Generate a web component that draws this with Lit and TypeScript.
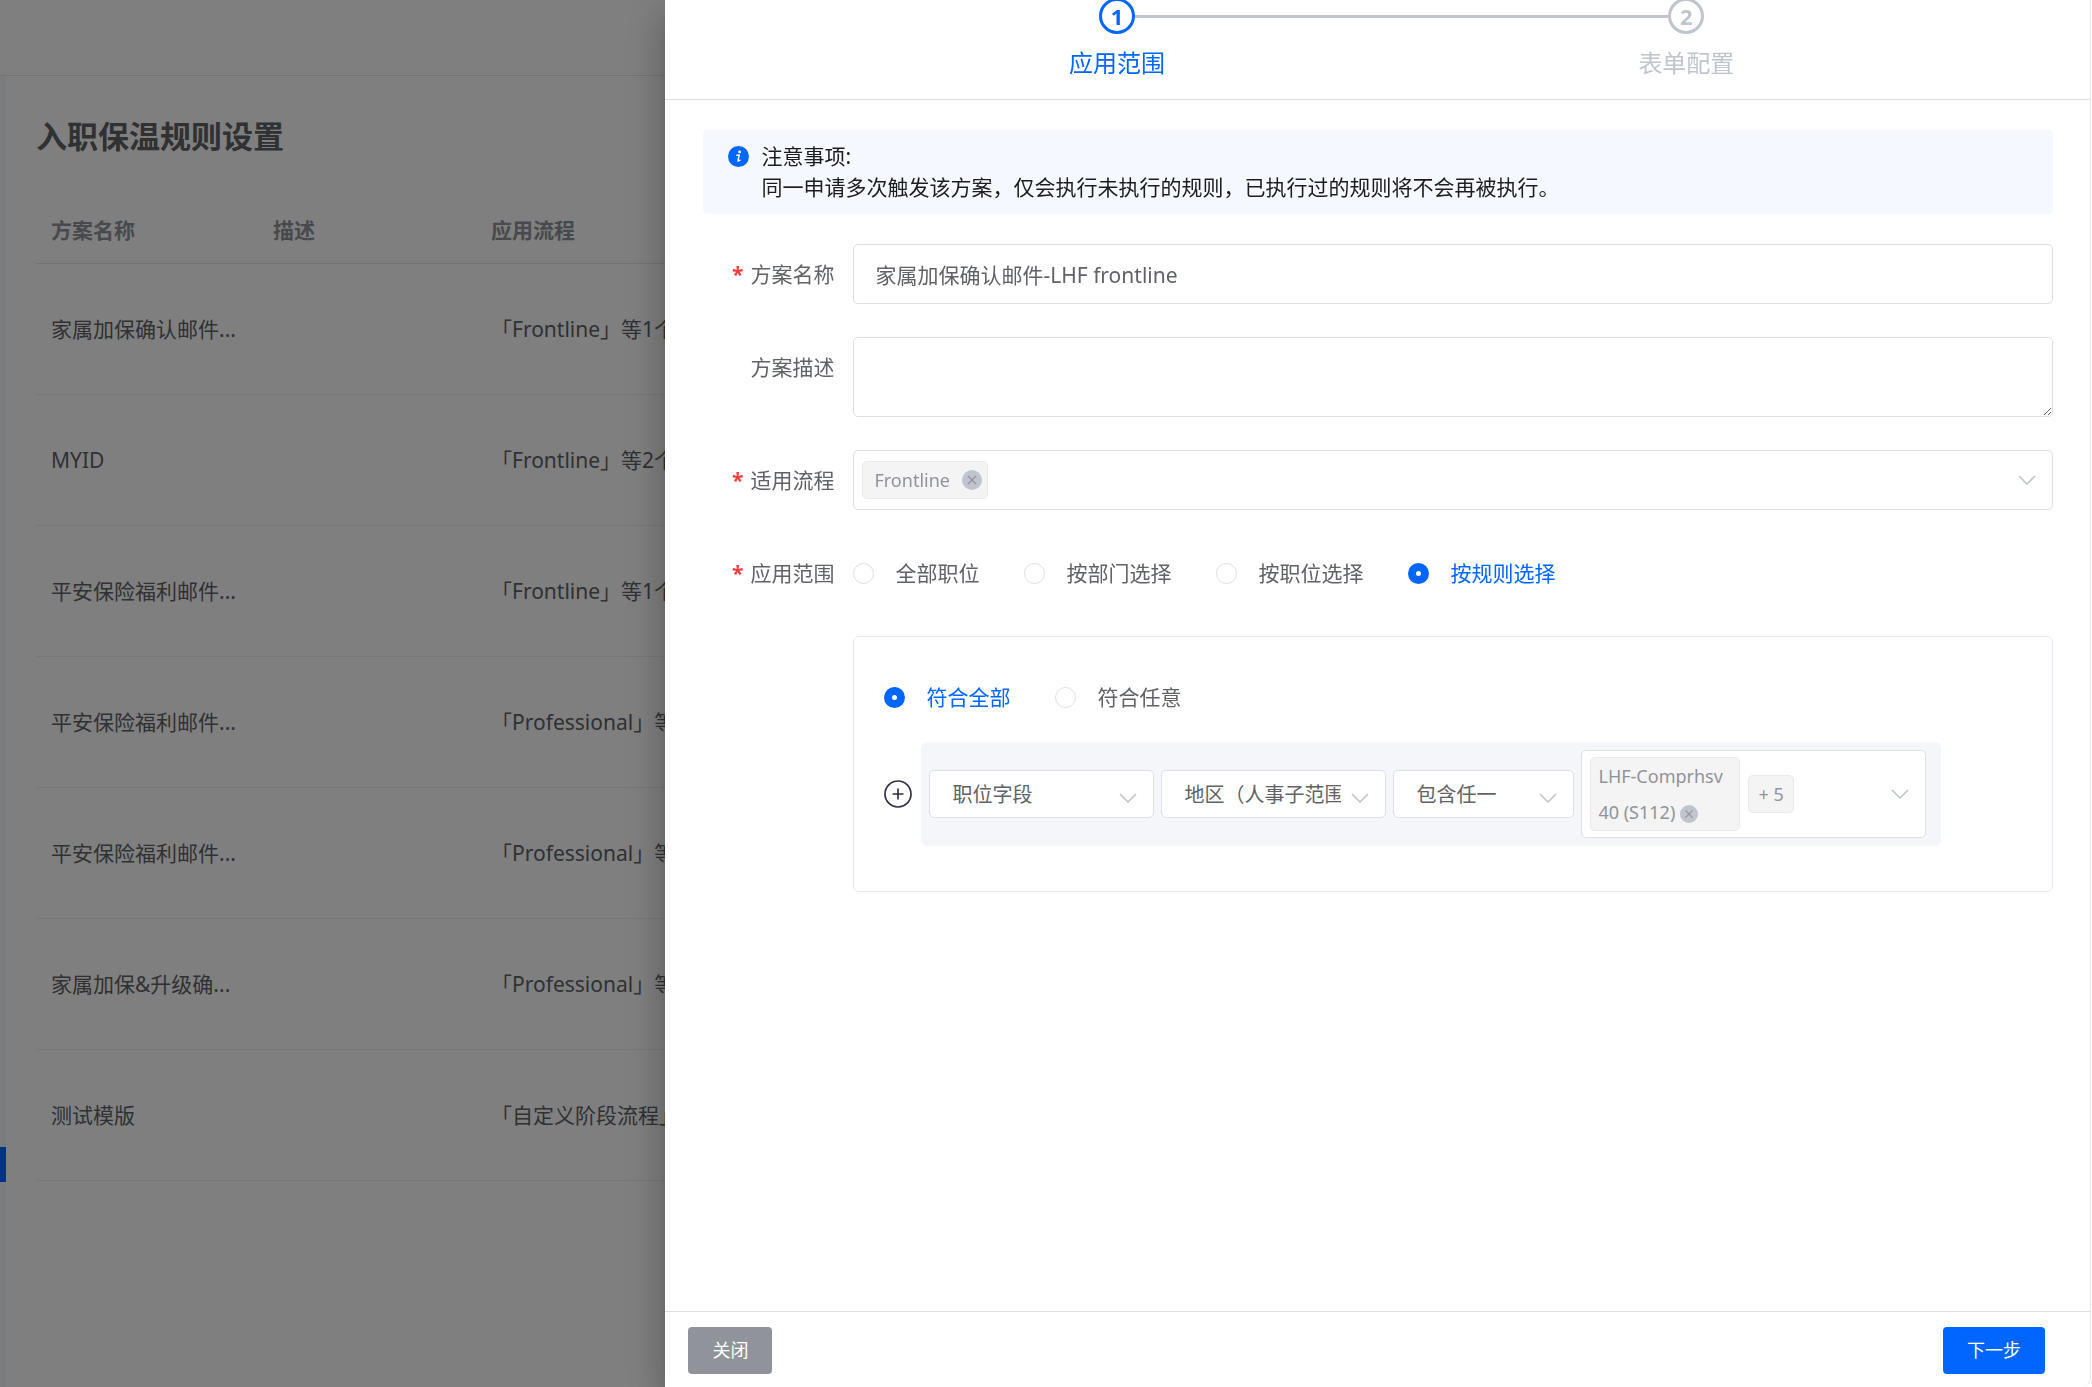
import { LitElement, html, svg, css, nothing } from "lit";
import { customElement, property, state } from "lit/decorators.js";
import { classMap } from "lit/directives/class-map.js";

interface Plan {
  name: string;
  description: string;
  flow: string;
}

const PLANS: Plan[] = [
  { name: "家属加保确认邮件...", description: "", flow: "「Frontline」等1个" },
  { name: "MYID", description: "", flow: "「Frontline」等2个" },
  { name: "平安保险福利邮件...", description: "", flow: "「Frontline」等1个" },
  { name: "平安保险福利邮件...", description: "", flow: "「Professional」等" },
  { name: "平安保险福利邮件...", description: "", flow: "「Professional」等" },
  { name: "家属加保&升级确...", description: "", flow: "「Professional」等" },
  { name: "测试模版", description: "", flow: "「自定义阶段流程」" },
];

const SCOPES = ["全部职位", "按部门选择", "按职位选择", "按规则选择"];
const MATCHES = ["符合全部", "符合任意"];

const chevron = svg`<svg class="chevron" viewBox="0 0 18 10" width="18" height="10" aria-hidden="true">
  <path d="M1 1 L9 9 L17 1" fill="none" stroke="#c0c4cc" stroke-width="1.6" />
</svg>`;

const cross = svg`<svg viewBox="0 0 20 20" aria-hidden="true">
  <path d="M6 6 L14 14 M14 6 L6 14" stroke="#909399" stroke-width="1.2" />
</svg>`;

const FONT = css`"Noto Sans", "Noto Sans CJK SC", sans-serif`;

@customElement("plan-table")
class PlanTable extends LitElement {
  static styles = css`
    :host { display: block; }
    .plans { width: 100%; table-layout: fixed; border-collapse: collapse; font-size: 21px; line-height: 30px; }
    .plans th, .plans td { padding: 0 15px; text-align: left; border-bottom: 1px solid #ebeef5; white-space: nowrap; overflow: hidden; }
    .plans th { height: 62px; padding-bottom: 2px; color: #909399; font-weight: 700; border-bottom-color: #e4e4e4; }
    .plans td { height: 130px; color: #606266; }
    .name { width: 192px; }
    .desc { width: 188px; }
  `;

  render() {
    return html`
      <table class="plans">
        <thead>
          <tr><th class="name">方案名称</th><th class="desc">描述</th><th>应用流程</th></tr>
        </thead>
        <tbody>
          ${PLANS.map((p) => html`<tr><td>${p.name}</td><td>${p.description}</td><td>${p.flow}</td></tr>`)}
        </tbody>
      </table>
    `;
  }
}

@customElement("radio-set")
class RadioSet extends LitElement {
  @property() name = "";
  @property() label = "";
  @property({ attribute: false }) options: string[] = [];
  @property() value = "";

  static styles = css`
    :host { display: block; }
    .set { display: flex; flex-wrap: wrap; gap: 45px; }
    .option { display: flex; align-items: center; gap: 21px; color: #606266; font-size: 21px; line-height: 30px; cursor: pointer; }
    .option.on { color: #0066ff; }
    .dot { appearance: none; box-sizing: border-box; width: 21px; height: 21px; margin: 0; border: 1px solid #dcdfe6; border-radius: 50%; background: #fff; }
    .dot:checked { border: 8px solid #0066ff; }
  `;

  render() {
    return html`
      <div class="set" role="radiogroup" aria-label=${this.label}>
        ${this.options.map((o) => html`
          <label class=${classMap({ option: true, on: o === this.value })}>
            <input class="dot" type="radio" name=${this.name} .value=${o} .checked=${o === this.value}
              @change=${() => (this.value = o)} />
            <span>${o}</span>
          </label>`)}
      </div>
    `;
  }
}

@customElement("app-root")
class AppRoot extends LitElement {
  @state() private planName = "家属加保确认邮件-LHF frontline";
  @state() private flows = ["Frontline"];
  @state() private regions = ["LHF-Comprhsv 40 (S112)"];

  static styles = css`
    :host { display: block; min-height: 100vh; background: #fff; font-family: ${FONT}; color: #606266; }
    *, *::before, *::after { box-sizing: border-box; }
    button, input, textarea, select { font: inherit; color: inherit; }

    .page { display: flex; flex-direction: column; min-height: 100vh; }
    .topbar { height: 76px; border-bottom: 1px solid #e4e4e4; }
    .body { flex: 1; display: flex; }
    .rail { width: 6px; padding-top: 1071px; background: #f5f6fb; }
    .rail-mark { height: 35px; background: #0066ff; }
    .content { flex: 1; min-width: 0; padding: 36px 30px; }
    .title { margin: 0 0 39px; font-size: 31px; line-height: 48px; font-weight: 700; }

    .overlay { position: fixed; inset: 0; display: flex; justify-content: flex-end; overflow: hidden; background: rgba(0, 0, 0, 0.5); }
    .shell {
      display: flex; width: calc(68% + 4px); padding-right: 1px; background: #fff;
      box-shadow: 0 10px 13px -7px rgba(0, 0, 0, 0.2), 0 21px 32px 3px rgba(0, 0, 0, 0.14), 0 8px 40px 7px rgba(0, 0, 0, 0.12);
    }
    .drawer { flex: 1; min-width: 0; display: flex; flex-direction: column; border-right: 1px solid #e4e4e8; border-bottom-right-radius: 9px; }

    .steps { display: flex; align-items: flex-end; height: 100px; margin: 0; padding: 0 119px 15px 167px; border-bottom: 1px solid #dcdfe6; list-style: none; }
    .step { position: relative; flex: 1; display: flex; flex-direction: column; align-items: center; gap: 8px; color: #c0c4cc; font-size: 24px; line-height: 42px; }
    .step.current { color: #0066ff; }
    .step + .step::before { content: ""; position: absolute; top: 17px; right: calc(50% + 18px); width: calc(100% - 36px); height: 3px; background: #c0c4cc; }
    .num { display: grid; place-items: center; width: 36px; height: 36px; border: 3px solid currentColor; border-radius: 50%; font-size: 22px; line-height: 30px; font-weight: 700; }

    .main { flex: 1; padding: 30px 37px 30px 38px; overflow: auto; }
    .notice { display: flex; gap: 12px; margin-bottom: 30px; padding: 11px 25px; border-radius: 5px; background: #f5f8ff; color: #1d1d1f; font-size: 21px; line-height: 31px; }
    .notice p { margin: 0; }
    .info { flex: none; width: 21px; height: 21px; margin-top: 5px; }

    .form { display: flex; flex-direction: column; gap: 33px; }
    .row { display: grid; grid-template-columns: 150px minmax(0, 1fr); font-size: 21px; }
    .caption { padding-right: 19px; line-height: 60px; text-align: right; }
    .required::before { content: "*"; margin-right: 7px; color: #f53f3f; font-weight: 700; }
    .field { grid-column: 2; min-width: 0; }
    .text { display: block; width: 100%; height: 60px; padding: 0 21px; border: 1px solid #dcdfe6; border-radius: 5px; background: #fff; }
    .area { display: block; width: 100%; height: 80px; padding: 7px 20px; border: 1px solid #dcdfe6; border-radius: 5px; background: #fff; resize: vertical; }
    .radios { display: flex; align-items: center; min-height: 60px; }

    .multi { display: flex; align-items: center; gap: 8px; min-height: 60px; padding: 6px 16px 6px 8px; border: 1px solid #dcdfe6; border-radius: 5px; background: #fff; }
    .filter { flex: 1; width: 0; min-width: 0; padding: 0; border: 0; outline: 0; background: none; }
    .chevron { flex: none; }
    .tag { display: flex; align-items: center; gap: 12px; padding: 0 5px 0 11px; border: 1px solid #e9e9eb; border-radius: 5px; background: #f4f4f5; color: #909399; font-size: 18px; line-height: 36px; }
    .tag.wrapped { display: block; width: 150px; padding: 0 7px; }
    .tag.wrapped .remove { width: 18px; height: 18px; vertical-align: middle; }
    .tag.count { padding: 0 9px; }
    .remove { display: inline-block; width: 20px; height: 20px; padding: 0; border: 0; border-radius: 50%; background: #c0c4cc; line-height: 0; cursor: pointer; }
    .remove svg { width: 100%; height: 100%; }

    .box { padding: 45px 30px; border: 1px solid #e8e9f3; border-radius: 6px; }
    .rule { display: flex; align-items: center; gap: 9px; margin-top: 30px; }
    .add { flex: none; width: 28px; height: 28px; padding: 0; border: 0; background: none; line-height: 0; cursor: pointer; }
    .conditions { display: flex; align-items: center; gap: 7px; padding: 8px 15px 8px 8px; border-radius: 6px; background: #f5f6fa; font-size: 20px; }
    .pick { position: relative; width: 225px; }
    .pick.short { width: 181px; }
    .pick select { appearance: none; display: block; width: 100%; height: 48px; padding: 0 44px 0 22px; border: 1px solid #dcdfe6; border-radius: 5px; background: #fff; }
    .pick .chevron { position: absolute; top: 23px; right: 17px; pointer-events: none; }
    .conditions .multi { width: 345px; }

    .footer { display: flex; justify-content: space-between; padding: 15px 45px 13px 23px; border-top: 1px solid #dcdfe6; }
    .btn { height: 47px; padding: 0 24px; border: 0; border-radius: 4px; background: #909399; color: #fff; font-size: 18px; line-height: 47px; cursor: pointer; }
    .btn.primary { background: #0066ff; }
  `;

  private tag(text: string, wrapped: boolean, remove: () => void) {
    return html`<span class=${classMap({ tag: true, wrapped })}>${text}
      <button class="remove" type="button" aria-label="移除" @click=${remove}>${cross}</button></span>`;
  }

  private pick(label: string, value: string, short = false) {
    return html`<div class=${classMap({ pick: true, short })}>
      <select aria-label=${label}><option>${value}</option></select>${chevron}
    </div>`;
  }

  render() {
    return html`
      <div class="page">
        <header class="topbar"></header>
        <div class="body">
          <div class="rail"><div class="rail-mark"></div></div>
          <main class="content">
            <h1 class="title">入职保温规则设置</h1>
            <plan-table></plan-table>
          </main>
        </div>
      </div>

      <div class="overlay">
        <div class="shell">
          <section class="drawer" role="dialog" aria-label="应用范围">
            <ol class="steps">
              <li class="step current"><span class="num">1</span><span>应用范围</span></li>
              <li class="step"><span class="num">2</span><span>表单配置</span></li>
            </ol>

            <div class="main">
              <div class="notice">
                <svg class="info" viewBox="0 0 21 21" aria-hidden="true">
                  <circle cx="10.5" cy="10.5" r="10.5" fill="#0066ff" />
                  <circle cx="11.6" cy="5.9" r="1.4" fill="#fff" />
                  <path d="M9 9.3 L11.3 8.9 L9.9 14.6 Q9.8 15.6 12 14.2" fill="none" stroke="#fff" stroke-width="1.5" stroke-linecap="round" stroke-linejoin="round" />
                </svg>
                <div>
                  <p>注意事项:</p>
                  <p>同一申请多次触发该方案，仅会执行未执行的规则，已执行过的规则将不会再被执行。</p>
                </div>
              </div>

              <form class="form" @submit=${(e: Event) => e.preventDefault()}>
                <div class="row">
                  <label class="caption required" for="name">方案名称</label>
                  <input class="text" id="name" type="text" .value=${this.planName} />
                </div>
                <div class="row">
                  <label class="caption" for="desc">方案描述</label>
                  <textarea class="area" id="desc"></textarea>
                </div>
                <div class="row">
                  <label class="caption required" for="flow">适用流程</label>
                  <div class="multi">
                    ${this.flows.map((f) => this.tag(f, false, () => (this.flows = this.flows.filter((x) => x !== f))))}
                    <input class="filter" id="flow" type="text" />
                    ${chevron}
                  </div>
                </div>
                <div class="row">
                  <span class="caption required">应用范围</span>
                  <div class="radios">
                    <radio-set name="scope" label="应用范围" .options=${SCOPES} value="按规则选择"></radio-set>
                  </div>
                </div>
                <div class="row">
                  <div class="field box">
                    <radio-set name="match" label="匹配方式" .options=${MATCHES} value="符合全部"></radio-set>
                    <div class="rule">
                      <button class="add" type="button" aria-label="添加">
                        <svg viewBox="0 0 28 28" width="28" height="28" aria-hidden="true">
                          <g fill="none" stroke="#303045" stroke-width="1.7">
                            <circle cx="14" cy="14" r="13" />
                            <path d="M14 8.5 V19.5 M8.5 14 H19.5" />
                          </g>
                        </svg>
                      </button>
                      <div class="conditions">
                        ${this.pick("字段类型", "职位字段")}
                        ${this.pick("字段", "地区（人事子范围")}
                        ${this.pick("条件", "包含任一", true)}
                        <div class="multi">
                          ${this.regions.map((r) => this.tag(r, true, () => (this.regions = [])))}
                          ${this.regions.length ? html`<span class="tag count">+ 5</span>` : nothing}
                          <input class="filter" type="text" aria-label="取值" />
                          ${chevron}
                        </div>
                      </div>
                    </div>
                  </div>
                </div>
              </form>
            </div>

            <footer class="footer">
              <button class="btn" type="button">关闭</button>
              <button class="btn primary" type="button">下一步</button>
            </footer>
          </section>
        </div>
      </div>
    `;
  }
}
